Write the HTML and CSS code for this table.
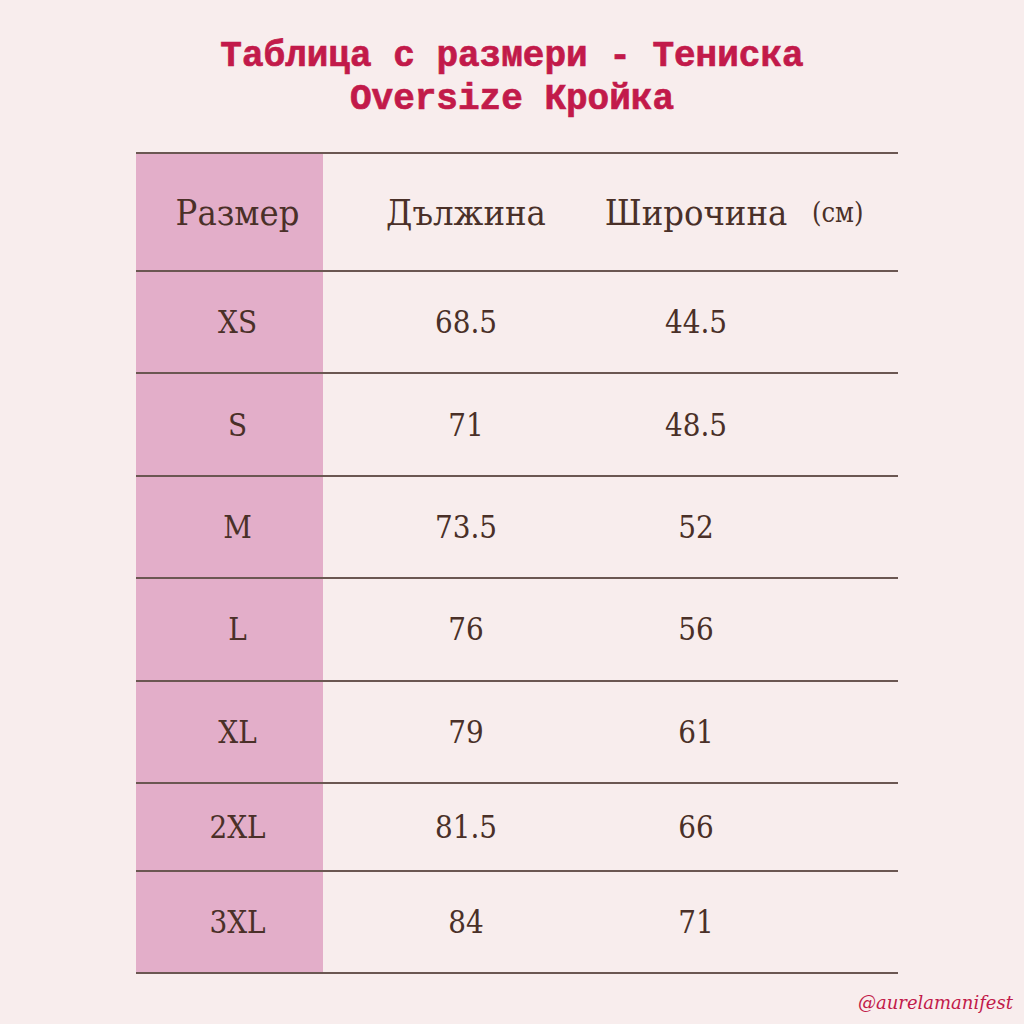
FILE: index.html
```html
<!DOCTYPE html>
<html lang="bg">
<head>
<meta charset="utf-8">
<title>Таблица с размери</title>
<link rel="stylesheet" href="styles.css">
</head>
<body>
<div class="page">
  <h1 class="title">Таблица с размери - Тениска<br>Oversize Кройка</h1>
  <div class="table">
    <div class="row head">
      <div class="cell size">Размер</div>
      <div class="cell">Дължина</div>
      <div class="cell">Широчина</div>
      <div class="cell unit">(см)</div>
    </div>
    <div class="row"><div class="cell size">XS</div><div class="cell">68.5</div><div class="cell">44.5</div><div class="cell"></div></div>
    <div class="row"><div class="cell size">S</div><div class="cell">71</div><div class="cell">48.5</div><div class="cell"></div></div>
    <div class="row"><div class="cell size">M</div><div class="cell">73.5</div><div class="cell">52</div><div class="cell"></div></div>
    <div class="row"><div class="cell size">L</div><div class="cell">76</div><div class="cell">56</div><div class="cell"></div></div>
    <div class="row"><div class="cell size">XL</div><div class="cell">79</div><div class="cell">61</div><div class="cell"></div></div>
    <div class="row short"><div class="cell size">2XL</div><div class="cell">81.5</div><div class="cell">66</div><div class="cell"></div></div>
    <div class="row last"><div class="cell size">3XL</div><div class="cell">84</div><div class="cell">71</div><div class="cell"></div></div>
  </div>
  <div class="handle">@aurelamanifest</div>
</div>
</body>
</html>
```

FILE: styles.css
```css
html, body {
  margin: 0;
  padding: 0;
  background: #f8eded;
}
.page {
  width: 1024px;
  height: 1024px;
  display: flex;
  flex-direction: column;
  align-items: center;
  box-sizing: border-box;
  padding-top: 35px;
}
.title {
  margin: 0;
  font-family: "Liberation Mono", monospace;
  font-weight: bold;
  font-size: 36px;
  line-height: 43px;
  color: #c21a4a;
  -webkit-text-stroke: 0.7px #c21a4a;
  text-align: center;
  letter-spacing: 0;
}
.table {
  margin-top: 31px;
  margin-left: 10px;
  width: 762px;
  font-family: "DejaVu Serif", serif;
  font-stretch: condensed;
  color: #4a3028;
  font-size: 31px;
}
.row {
  box-sizing: border-box;
  display: grid;
  grid-template-columns: 187px 286px 174px 115px;
  height: 102.4px;
  border-top: 2px solid #6b5752;
}
.row.head { height: 118px; }
.row.short { height: 88px; }
.row.last { height: 104px; border-bottom: 2px solid #6b5752; }
.cell {
  display: flex;
  align-items: center;
  justify-content: center;
}
.cell.size {
  background: #e3aec9;
  padding-left: 16px;
}
.head .cell { font-size: 36px; }
.cell.unit {
  font-size: 27px;
  justify-content: flex-start;
  padding-left: 29px;
}
.handle {
  align-self: flex-end;
  margin-right: 11px;
  margin-top: 18px;
  font-family: "DejaVu Serif", serif;
  font-style: italic;
  font-size: 18px;
  color: #c21a4a;
}
```
